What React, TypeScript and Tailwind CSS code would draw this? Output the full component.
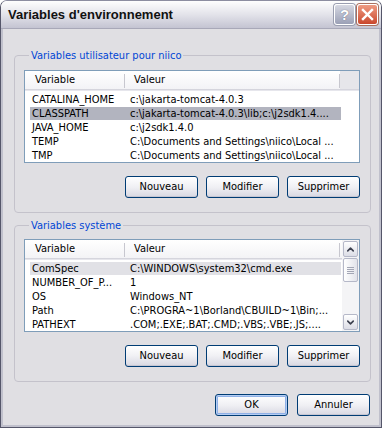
import { ChevronUp, ChevronDown } from "lucide-react";

interface EnvVar {
  name: string;
  value: string;
}

const userVars: EnvVar[] = [
  { name: "CATALINA_HOME", value: "c:\\jakarta-tomcat-4.0.3" },
  { name: "CLASSPATH", value: "c:\\jakarta-tomcat-4.0.3\\lib;c:\\j2sdk1.4...." },
  { name: "JAVA_HOME", value: "c:\\j2sdk1.4.0" },
  { name: "TEMP", value: "C:\\Documents and Settings\\niico\\Local ..." },
  { name: "TMP", value: "C:\\Documents and Settings\\niico\\Local ..." },
];

const systemVars: EnvVar[] = [
  { name: "ComSpec", value: "C:\\WINDOWS\\system32\\cmd.exe" },
  { name: "NUMBER_OF_P...", value: "1" },
  { name: "OS", value: "Windows_NT" },
  { name: "Path", value: "C:\\PROGRA~1\\Borland\\CBUILD~1\\Bin;..." },
  { name: "PATHEXT", value: ".COM;.EXE;.BAT;.CMD;.VBS;.VBE;.JS;...." },
];

const font = "font-['Tahoma','DejaVu_Sans_Condensed','Liberation_Sans',sans-serif]";

const XpButton = ({ label, isDefault }: { label: string; isDefault?: boolean }) => (
  <button
    className={`w-[73px] h-[22px] rounded-[3px] border border-[#003c74] bg-gradient-to-b from-white via-[#f0f0f4] to-[#d8d8e2] text-[11px] text-black ${
      isDefault ? "shadow-[inset_0_0_0_1px_#b4cdf3,inset_0_0_0_2px_#8fb0e6]" : "shadow-[inset_0_-1px_0_#c6c6d2]"
    }`}
  >
    {label}
  </button>
);

const ListView = ({ rows, selected, selectedColor, scroll }: { rows: EnvVar[]; selected: number; selectedColor: string; scroll?: boolean }) => (
  <div className="h-[93px] border border-[#7f9db9] bg-white flex overflow-hidden">
    <div className="flex-1 flex flex-col min-w-0">
      <div className="h-[19px] flex text-[11px] text-black bg-gradient-to-b from-white to-[#f3f3f6] border-b border-[#d5d5dd] shadow-[0_1px_0_#e6e6ec]">
        <div className="w-[100px] flex items-center pl-[10px] relative">
          Variable
          <span className="absolute right-0 top-[3px] h-[14px] w-[1px] bg-[#c7c7cf]" />
        </div>
        <div className="w-[215px] flex items-center pl-[9px] relative">
          Valeur
          <span className="absolute right-0 top-[3px] h-[14px] w-[1px] bg-[#c7c7cf]" />
        </div>
        {!scroll && <div className="flex-1 bg-[#e6e6ea]" />}
      </div>
      <div className="pt-[2px]">
        {rows.map((r, i) => (
          <div key={r.name} className="h-[14px] flex items-center text-[11px] text-black">
            <div
              className="flex h-[13px] items-center ml-[5px] w-[311px] leading-[13px]"
              style={{ backgroundColor: i === selected ? selectedColor : "transparent" }}
            >
              <span className="w-[95px] shrink-0 pl-[2px] whitespace-nowrap">{r.name}</span>
              <span className="pl-[5px] whitespace-nowrap">{r.value}</span>
            </div>
          </div>
        ))}
      </div>
    </div>
    {scroll && (
      <div className="w-[17px] bg-[#f4f4f6] flex flex-col p-[1px] gap-0">
        <div className="h-[16px] rounded-[2px] border border-[#b5b8c8] bg-gradient-to-b from-white to-[#dcdde6] flex items-center justify-center">
          <ChevronUp className="w-[11px] h-[11px] text-[#3d4150]" strokeWidth={3.5} />
        </div>
        <div className="h-[24px] mt-[1px] rounded-[2px] border border-[#b5b8c8] bg-gradient-to-r from-white to-[#e2e3ea] flex flex-col items-center justify-center gap-[1px]">
          <span className="w-[7px] h-[1px] bg-[#a3a6b5]" />
          <span className="w-[7px] h-[1px] bg-[#a3a6b5]" />
          <span className="w-[7px] h-[1px] bg-[#a3a6b5]" />
          <span className="w-[7px] h-[1px] bg-[#a3a6b5]" />
        </div>
        <div className="flex-1" />
        <div className="h-[16px] rounded-[2px] border border-[#b5b8c8] bg-gradient-to-b from-white to-[#dcdde6] flex items-center justify-center">
          <ChevronDown className="w-[11px] h-[11px] text-[#3d4150]" strokeWidth={3.5} />
        </div>
      </div>
    )}
  </div>
);

const GroupBox = ({ title, top, children }: { title: string; top: string; children: React.ReactNode }) => (
  <fieldset className={`border border-[#c4c2cb] rounded-[4px] pl-[9px] pr-[10px] pb-[14px] ${top}`}>
    <legend className="ml-[5px] px-[2px] text-[11px] text-[#0046d5] leading-[13px]">{title}</legend>
    {children}
  </fieldset>
);

export default function App() {
  return (
    <div className={`w-[385px] h-[429px] bg-white ${font}`}>
      <div className="w-[382px] h-[428px] flex flex-col rounded-t-[7px] overflow-hidden border border-[#55566a] border-t-[#8c8da0]">
        <div className="h-[28px] flex items-center pl-[7px] pr-[3px] bg-gradient-to-b from-[#fefefe] via-[#e3e3ea] to-[#c4c4d2] border-b border-[#a8a8b8]">
          <span className="flex-1 text-[13px] font-bold text-[#111] font-['Liberation_Sans',sans-serif]">
            Variables d'environnement
          </span>
          <div className="flex gap-[2px]">
            <div className="w-[21px] h-[21px] rounded-[3px] border border-white bg-gradient-to-b from-[#d6d8e2] to-[#9ba0b6] flex items-center justify-center shadow-[0_0_0_1px_#9a9eb0]">
              <span className="text-[15px] font-bold text-white leading-none font-['Liberation_Sans',sans-serif] [text-shadow:0_0_1px_#4a4e66]">?</span>
            </div>
            <div className="w-[21px] h-[21px] rounded-[3px] border border-white bg-gradient-to-b from-[#ee9b83] to-[#c9462c] flex items-center justify-center shadow-[0_0_0_1px_#a9705f]">
              <svg width="13" height="13" viewBox="0 0 13 13">
                <path d="M2 2 L11 11 M11 2 L2 11" stroke="white" strokeWidth="2.4" strokeLinecap="square" />
              </svg>
            </div>
          </div>
        </div>
        <div className="flex-1 bg-[#e0dfe3] border-x-2 border-b-2 border-[#c0c0cc] pl-[11px] pr-[8px] pt-[20px] flex flex-col">
          <GroupBox title="Variables utilisateur pour niico" top="pt-[8px]">
            <ListView rows={userVars} selected={1} selectedColor="#b2b4bf" />
            <div className="flex justify-end gap-[8px] mt-[13px]">
              <XpButton label="Nouveau" />
              <XpButton label="Modifier" />
              <XpButton label="Supprimer" />
            </div>
          </GroupBox>
          <div className="h-[6px] shrink-0" />
          <GroupBox title="Variables système" top="pt-[7px]">
            <ListView rows={systemVars} selected={0} selectedColor="#e1e1e6" scroll />
            <div className="flex justify-end gap-[8px] mt-[13px]">
              <XpButton label="Nouveau" />
              <XpButton label="Modifier" />
              <XpButton label="Supprimer" />
            </div>
          </GroupBox>
          <div className="flex justify-end gap-[9px] mt-[12px] pr-[1px]">
            <XpButton label="OK" isDefault />
            <XpButton label="Annuler" />
          </div>
        </div>
      </div>
    </div>
  );
}
